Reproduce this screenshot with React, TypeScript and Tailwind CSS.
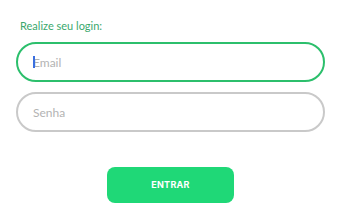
import React from "react";

export default function App() {
  return (
    <div className="h-[220px] w-[340px] bg-white pl-4 pr-[15px] pt-[18px] font-['Lato','Open_Sans',sans-serif]">
      <p className="pl-1 text-[11px] leading-[16px] text-[#3aa86d]">Realize seu login:</p>
      <div className="mt-2 flex flex-col gap-[10px]">
        <div className="relative">
          <input
            placeholder="Email"
            className="h-10 w-full rounded-full border-2 border-[#2cbf6c] px-[15px] text-[12px] text-gray-700 outline-none placeholder:text-[#b3b3b3]"
          />
          {/* focused caret */}
          <span className="pointer-events-none absolute left-[17px] top-[14px] h-[12px] w-[1.5px] bg-[#3b6fe0]" />
        </div>
        <input
          type="password"
          placeholder="Senha"
          className="h-10 w-full rounded-full border-2 border-[#c9c9c9] px-[15px] text-[12px] text-gray-700 outline-none placeholder:text-[#b3b3b3]"
        />
      </div>
      <div className="mt-[35px] flex justify-center">
        <button className="h-9 w-[127px] rounded-lg bg-[#1fd877] font-['Inter',sans-serif] text-[9px] font-bold tracking-[0.3px] text-white">
          ENTRAR
        </button>
      </div>
    </div>
  );
}
